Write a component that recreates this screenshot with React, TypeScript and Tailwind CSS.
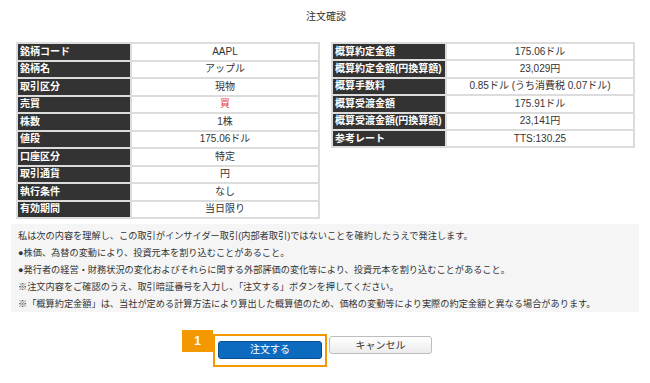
import React from "react";

// ---------------------------------------------------------------------------
// Order confirmation (注文確認)
// ---------------------------------------------------------------------------
const orderRows: [string, React.ReactNode][] = [
  ["銘柄コード", "AAPL"],
  ["銘柄名", "アップル"],
  ["取引区分", "現物"],
  ["売買", <span className="text-[#e53935]">買</span>],
  ["株数", "1株"],
  ["値段", "175.06ドル"],
  ["口座区分", "特定"],
  ["取引通貨", "円"],
  ["執行条件", "なし"],
  ["有効期間", "当日限り"],
];

const amountRows: [string, string][] = [
  ["概算約定金額", "175.06ドル"],
  ["概算約定金額(円換算額)", "23,029円"],
  ["概算手数料", "0.85ドル (うち消費税 0.07ドル)"],
  ["概算受渡金額", "175.91ドル"],
  ["概算受渡金額(円換算額)", "23,141円"],
  ["参考レート", "TTS:130.25"],
];

const notes = [
  "私は次の内容を理解し、この取引がインサイダー取引(内部者取引)ではないことを確約したうえで発注します。",
  "●株価、為替の変動により、投資元本を割り込むことがあること。",
  "●発行者の経営・財務状況の変化およびそれらに関する外部評価の変化等により、投資元本を割り込むことがあること。",
  "※注文内容をご確認のうえ、取引暗証番号を入力し、「注文する」ボタンを押してください。",
  "※「概算約定金額」は、当社が定める計算方法により算出した概算値のため、価格の変動等により実際の約定金額と異なる場合があります。",
];

function InfoTable({ rows, rowH }: { rows: [string, React.ReactNode][]; rowH: string }) {
  return (
    <table className="w-full border-collapse border-2 border-[#dcdcdc] text-[10px]">
      <tbody>
        {rows.map(([label, value]) => (
          <tr key={label} className={rowH}>
            <th className="w-[114px] border-2 border-[#dcdcdc] bg-[#333333] px-[2px] text-left font-bold text-white leading-none">
              {label}
            </th>
            <td className="border-2 border-[#dcdcdc] bg-white text-center text-[#333] leading-none">
              {value}
            </td>
          </tr>
        ))}
      </tbody>
    </table>
  );
}

export default function App() {
  return (
    <div
      className="w-[650px] h-[383px] bg-white text-[#333]"
      style={{ fontFamily: '"Liberation Sans", "Noto Sans CJK JP", sans-serif' }}
    >
      <h1 className="pt-[11px] text-center text-[10px] leading-[12px] pl-[2px]">注文確認</h1>

      <div className="mt-[19px] flex items-start gap-[11px] pl-[16px] pr-[15px]">
        <div className="w-[304px]">
          <InfoTable rows={orderRows} rowH="h-[17.5px]" />
        </div>
        <div className="w-[304px]">
          <InfoTable rows={amountRows} rowH="h-[17.4px]" />
        </div>
      </div>

      <div className="mx-[11px] mt-[5px] h-[88px] bg-[#f5f5f5] px-[7px] pt-[4px] text-[9.2px] leading-[17px] text-[#333]">
        {notes.map((n) => (
          <p key={n} className="whitespace-nowrap">{n}</p>
        ))}
      </div>

      {/* ── action buttons ── */}
      <div className="mt-[18px] ml-[182px] flex items-start">
        <div className="flex items-start">
          <div className="flex h-[22px] w-[31px] items-center justify-center bg-[#f39800] text-[12px] font-bold text-white">
            1
          </div>
          <div className="mt-[4px] border-2 border-[#f39800] px-[3px] pt-0 pb-[5px]">
            <button
              type="button"
              className="h-[18px] w-[104px] rounded-[3px] border border-[#0a4f8f] bg-[#0d6bbf] text-[10px] text-white"
            >
              注文する
            </button>
          </div>
        </div>
        <button
          type="button"
          className="mt-[6px] ml-[2px] h-[18px] w-[103px] rounded-[3px] border border-[#bdbdbd] bg-gradient-to-b from-white to-[#ececec] text-[10px] text-[#333]"
        >
          キャンセル
        </button>
      </div>
    </div>
  );
}
